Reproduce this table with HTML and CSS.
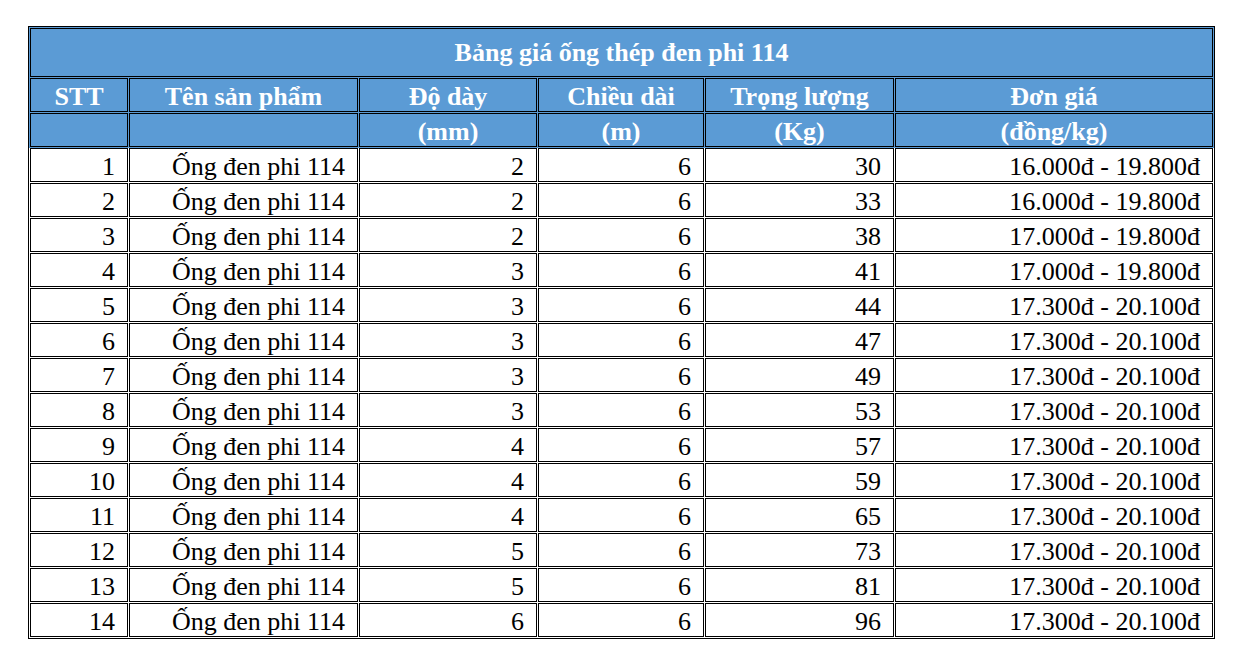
FILE: index.html
```html
<!DOCTYPE html>
<html lang="vi">
<head>
<meta charset="utf-8">
<title>Bảng giá ống thép đen phi 114</title>
<link rel="stylesheet" href="styles.css">
</head>
<body>
<table class="price-table">
  <colgroup>
    <col class="c-stt">
    <col class="c-name">
    <col class="c-thick">
    <col class="c-len">
    <col class="c-weight">
    <col class="c-price">
  </colgroup>
  <thead>
    <tr class="title-row"><th colspan="6">Bảng giá ống thép đen phi 114</th></tr>
    <tr class="head-row">
      <th>STT</th><th>Tên sản phẩm</th><th>Độ dày</th><th>Chiều dài</th><th>Trọng lượng</th><th>Đơn giá</th>
    </tr>
    <tr class="head-row">
      <th></th><th></th><th>(mm)</th><th>(m)</th><th>(Kg)</th><th>(đồng/kg)</th>
    </tr>
  </thead>
  <tbody>
    <tr class="row"><td>1</td><td>Ống đen phi 114</td><td>2</td><td>6</td><td>30</td><td>16.000đ - 19.800đ</td></tr>
    <tr class="row"><td>2</td><td>Ống đen phi 114</td><td>2</td><td>6</td><td>33</td><td>16.000đ - 19.800đ</td></tr>
    <tr class="row"><td>3</td><td>Ống đen phi 114</td><td>2</td><td>6</td><td>38</td><td>17.000đ - 19.800đ</td></tr>
    <tr class="row"><td>4</td><td>Ống đen phi 114</td><td>3</td><td>6</td><td>41</td><td>17.000đ - 19.800đ</td></tr>
    <tr class="row"><td>5</td><td>Ống đen phi 114</td><td>3</td><td>6</td><td>44</td><td>17.300đ - 20.100đ</td></tr>
    <tr class="row"><td>6</td><td>Ống đen phi 114</td><td>3</td><td>6</td><td>47</td><td>17.300đ - 20.100đ</td></tr>
    <tr class="row"><td>7</td><td>Ống đen phi 114</td><td>3</td><td>6</td><td>49</td><td>17.300đ - 20.100đ</td></tr>
    <tr class="row"><td>8</td><td>Ống đen phi 114</td><td>3</td><td>6</td><td>53</td><td>17.300đ - 20.100đ</td></tr>
    <tr class="row"><td>9</td><td>Ống đen phi 114</td><td>4</td><td>6</td><td>57</td><td>17.300đ - 20.100đ</td></tr>
    <tr class="row"><td>10</td><td>Ống đen phi 114</td><td>4</td><td>6</td><td>59</td><td>17.300đ - 20.100đ</td></tr>
    <tr class="row"><td>11</td><td>Ống đen phi 114</td><td>4</td><td>6</td><td>65</td><td>17.300đ - 20.100đ</td></tr>
    <tr class="row"><td>12</td><td>Ống đen phi 114</td><td>5</td><td>6</td><td>73</td><td>17.300đ - 20.100đ</td></tr>
    <tr class="row"><td>13</td><td>Ống đen phi 114</td><td>5</td><td>6</td><td>81</td><td>17.300đ - 20.100đ</td></tr>
    <tr class="row"><td>14</td><td>Ống đen phi 114</td><td>6</td><td>6</td><td>96</td><td>17.300đ - 20.100đ</td></tr>
  </tbody>
</table>
</body>
</html>
```
FILE: styles.css
```css
html, body {
  background: #ffffff;
}
body {
  margin: 0;
  padding: 26px 0 0 28px;
  font-family: "Liberation Serif", "Times New Roman", serif;
}
.price-table {
  table-layout: fixed;
  width: 1187px;
  border-collapse: separate;
  border-spacing: 1px;
  border: 1px solid #000;
  background: linear-gradient(#5b9bd5 0, #5b9bd5 121px, #ffffff 121px);
  font-size: 26px;
  color: #000;
}
.c-stt { width: 98px; }
.c-name { width: 229px; }
.c-thick { width: 178px; }
.c-len { width: 166px; }
.c-weight { width: 189px; }
.c-price { width: 318px; }

.price-table th,
.price-table td {
  border: 1px solid #000;
  line-height: 28px;
  white-space: nowrap;
  overflow: hidden;
}
.price-table th {
  background: #5b9bd5;
  color: #ffffff;
  font-weight: bold;
  text-align: center;
  padding: 4px 2px 0;
}
.price-table td {
  background: #ffffff;
  text-align: right;
  padding: 4px 12px 0 2px;
}
.title-row {
  height: 49px;
}
.title-row th {
  padding: 0 2px;
}
.head-row {
  height: 34px;
}
.row {
  height: 34px;
}
```
